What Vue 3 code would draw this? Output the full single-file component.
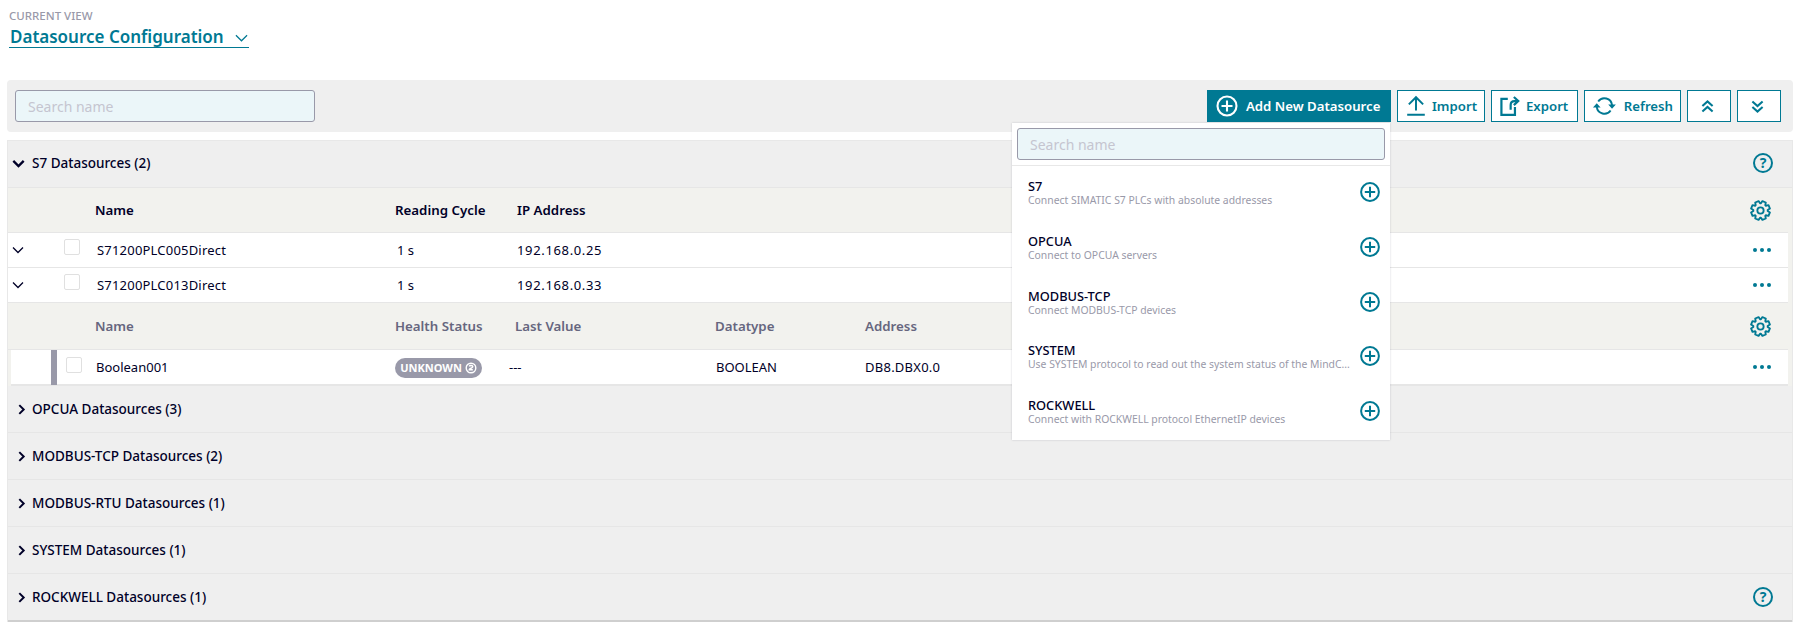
<script setup>
const groups = [
  { name: 'OPCUA Datasources (3)' },
  { name: 'MODBUS-TCP Datasources (2)' },
  { name: 'MODBUS-RTU Datasources (1)' },
  { name: 'SYSTEM Datasources (1)' },
  { name: 'ROCKWELL Datasources (1)', help: true },
]
const rows = [
  { name: 'S71200PLC005Direct', ip: '192.168.0.25' },
  { name: 'S71200PLC013Direct', ip: '192.168.0.33' },
]
const items = [
  { t: 'S7', d: 'Connect SIMATIC S7 PLCs with absolute addresses' },
  { t: 'OPCUA', d: 'Connect to OPCUA servers' },
  { t: 'MODBUS-TCP', d: 'Connect MODBUS-TCP devices' },
  { t: 'SYSTEM', d: 'Use SYSTEM protocol to read out the system status of the MindC...' },
  { t: 'ROCKWELL', d: 'Connect with ROCKWELL protocol EthernetIP devices' },
]
const polar = (deg, r) => {
  const a = (deg * Math.PI) / 180
  return `${(12 + r * Math.cos(a)).toFixed(2)} ${(12 + r * Math.sin(a)).toFixed(2)}`
}
let gear = ''
for (let i = 0; i < 8; i++) {
  const c = i * 45 + 22.5
  gear += `${i ? 'L' : 'M'}${polar(c - 19, 8.2)}L${polar(c - 11, 11)}L${polar(c + 11, 11)}L${polar(c + 19, 8.2)}`
}
const gearPath = gear + 'Z'
</script>

<template>
  <div class="page">
    <header class="view">
      <div class="view-label">CURRENT VIEW</div>
      <div class="view-title">
        <span>Datasource Configuration</span>
        <svg class="view-chev" viewBox="0 0 14 8"><path d="M1 1l6 6 6-6" /></svg>
      </div>
    </header>

    <div class="toolbar">
      <div class="search"><span>Search name</span></div>
      <div class="actions">
        <div class="add-wrap">
          <button class="btn primary">
            <svg class="ico-22" viewBox="0 0 22 22"><circle cx="11" cy="11" r="9.5" /><path d="M11 5.5v11M5.5 11h11" /></svg>
            <span>Add New Datasource</span>
          </button>
          <div class="menu">
            <div class="menu-search"><div class="search wide"><span>Search name</span></div></div>
            <div v-for="it in items" :key="it.t" class="menu-item">
              <div class="menu-text">
                <div class="menu-title">{{ it.t }}</div>
                <div class="menu-desc">{{ it.d }}</div>
              </div>
              <svg class="ico-plus" viewBox="0 0 20 20"><circle cx="10" cy="10" r="8.9" /><path d="M10 4.800v10.400M4.800 10h10.400" /></svg>
            </div>
          </div>
        </div>
        <button class="btn w-import">
          <svg class="ico-22" viewBox="0 0 18 20"><path d="M9 14V2M2.500 8.500L9 2l6.500 6.500M1 18h16" /></svg>
          <span>Import</span>
        </button>
        <button class="btn w-export">
          <svg class="ico-22 ico-export" viewBox="0 0 20 20"><path d="M8 3.600H2.200V18H14.500V11" /><path d="M10.600 13.500V9c0-2.500 1.500-3.500 3.500-3.500H17M13.500 1.800L17.500 5.500 13.500 9.200" /></svg>
          <span>Export</span>
        </button>
        <button class="btn w-refresh">
          <svg class="ico-refresh" viewBox="0 0 26 22"><path d="M6.500 6.300A8 8 0 0 1 21 10" /><path d="M19.500 15.700A8 8 0 0 1 5 12" /><path class="fill" d="M17 9.500h8L21 14zM1 12.500h8L5 8z" /></svg>
          <span>Refresh</span>
        </button>
        <button class="btn square">
          <svg class="ico-chev" viewBox="0 0 14 14"><path d="M1.500 6.500L7 1.500l5.500 5M1.500 12.500L7 7.500l5.500 5" /></svg>
        </button>
        <button class="btn square">
          <svg class="ico-chev" viewBox="0 0 14 14"><path d="M1.500 1.500L7 6.500l5.500-5M1.500 7.500L7 12.500l5.500-5" /></svg>
        </button>
      </div>
    </div>

    <div class="panel">
      <div class="group first">
        <svg class="group-chev" viewBox="0 0 10 10"><path d="M1 3l4 4 4-4" /></svg>
        <span class="group-name">S7 Datasources (2)</span>
        <svg class="ico-help" viewBox="0 0 20 20"><circle cx="10" cy="10" r="9" /><text x="10" y="14.500" text-anchor="middle">?</text></svg>
      </div>

      <div class="thead grid-a">
        <span></span><span></span>
        <span>Name</span><span>Reading Cycle</span><span>IP Address</span>
        <svg class="ico-gear" viewBox="0 0 24 24"><path :d="gearPath" /><circle cx="12" cy="12" r="3.600" /></svg>
      </div>

      <div v-for="r in rows" :key="r.name" class="trow grid-a">
        <svg class="row-chev" viewBox="0 0 12 8"><path d="M1 1.500l5 5 5-5" /></svg>
        <span class="check"></span>
        <span class="cell-name">{{ r.name }}</span>
        <span class="cell-cycle">1 s</span>
        <span class="cell-ip">{{ r.ip }}</span>
        <span class="dots"><i></i><i></i><i></i></span>
      </div>

      <div class="thead sub grid-b">
        <span></span>
        <span>Name</span><span>Health Status</span><span>Last Value</span><span>Datatype</span><span>Address</span>
        <svg class="ico-gear" viewBox="0 0 24 24"><path :d="gearPath" /><circle cx="12" cy="12" r="3.600" /></svg>
      </div>

      <div class="trow nested grid-b">
        <span class="check bar"></span>
        <span class="cell-name">Boolean001</span>
        <span class="badge">UNKNOWN
          <svg viewBox="0 0 12 12"><circle cx="6" cy="6" r="4.800" /><path d="M4.200 4.400c.6-1.300 3.600-1.300 3.600.4 0 1.300-3.600 1.600-3.600 3h3.600" /></svg>
        </span>
        <span class="cell-last">---</span>
        <span>BOOLEAN</span>
        <span class="cell-addr">DB8.DBX0.0</span>
        <span class="dots"><i></i><i></i><i></i></span>
      </div>

      <div v-for="g in groups" :key="g.name" class="group">
        <svg class="group-chev right" viewBox="0 0 10 10"><path d="M3 1l4 4-4 4" /></svg>
        <span class="group-name">{{ g.name }}</span>
        <svg v-if="g.help" class="ico-help" viewBox="0 0 20 20"><circle cx="10" cy="10" r="9" /><text x="10" y="14.500" text-anchor="middle">?</text></svg>
      </div>
    </div>
  </div>
</template>

<style>
html, body { margin: 0; background: #fff; }
</style>

<style scoped>
.page {
  width: 1804px;
  height: 627px;
  overflow: hidden;
  box-sizing: border-box;
  padding: 9px 11px 0 7px;
  font-family: "Noto Sans", "Liberation Sans", sans-serif;
  font-size: 13px;
  color: #000028;
}
.view { padding-left: 2px; height: 71px; box-sizing: border-box; }
.view-label { font-size: 11.5px; line-height: 14px; color: #9999a9; font-weight: 500; }
.view-title {
  display: inline-flex;
  align-items: center;
  justify-content: space-between;
  width: 240px;
  height: 25px;
  box-sizing: border-box;
  border-bottom: 1px solid #007993;
  color: #007993;
  font-size: 17px;
  font-weight: 600;
  padding: 2px 1px 0 1px;
}
.view-chev { width: 13px; height: 8px; fill: none; stroke: #007993; stroke-width: 1.300; margin-top: 4px; }

.toolbar {
  display: flex;
  justify-content: space-between;
  align-items: center;
  height: 52px;
  padding: 0 12px 0 8px;
  background: #efefef;
  border-radius: 4px;
}
.search {
  width: 300px;
  height: 32px;
  box-sizing: border-box;
  display: flex;
  align-items: center;
  padding-left: 12px;
  background: #ebf6f9;
  border: 1px solid #9999a9;
  border-radius: 3px;
  color: #c5c5d0;
  font-size: 14px;
}
.search.wide { width: 100%; }
.actions { display: flex; gap: 6px; }
.add-wrap { position: relative; }
.btn {
  display: flex;
  align-items: center;
  gap: 5px;
  height: 32px;
  box-sizing: border-box;
  padding: 0 7px;
  background: #fff;
  border: 1px solid #007993;
  color: #007993;
  font: 600 13.2px "Noto Sans", sans-serif;
  white-space: nowrap;
}
.btn.primary { width: 184px; background: #007993; color: #fff; padding-left: 9px; gap: 8px; border: 0; }
.btn.w-import { width: 88px; }
.btn.w-export { width: 87px; }
.btn.w-refresh { width: 97px; gap: 7px; }
.btn.square { width: 44px; padding: 0 0 0 13px; }
.btn svg { fill: none; stroke: currentColor; stroke-width: 1.800; }
.ico-22 { width: 22px; height: 22px; }
.primary .ico-22 { stroke-width: 2.100; }
.btn .ico-export { stroke-width: 2; }
.ico-refresh { width: 25px; height: 22px; }
.btn .ico-refresh { stroke-width: 2; }
.ico-refresh .fill { fill: currentColor; stroke: none; }
.btn .ico-chev { width: 13px; height: 13px; stroke-width: 2.200; }

.menu {
  position: absolute;
  z-index: 5;
  top: 33px;
  left: -195px;
  width: 378px;
  height: 317px;
  background: #fff;
  box-shadow: 0 0 2px rgba(0, 0, 40, 0.18);
}
.menu-search {
  box-sizing: border-box;
  padding: 5px;
  height: 43px;
  border-bottom: 1px solid #e8e8e8;
}
.menu-item {
  display: flex;
  align-items: center;
  justify-content: space-between;
  height: 54.700px;
  padding: 0 10px 0 16px;
  box-sizing: border-box;
}
.menu-text { width: 325px; }
.menu-title { font-size: 12.800px; font-weight: 500; line-height: 14px; padding-top: 1px; }
.menu-desc {
  font-size: 10.400px;
  line-height: 15px;
  color: #9999a9;
  white-space: nowrap;
  overflow: hidden;
  text-overflow: ellipsis;
}
.ico-plus { width: 20px; height: 20px; fill: none; stroke: #007993; stroke-width: 2; margin-top: -2px; }

.panel {
  margin-top: 8px;
  border-left: 1px solid #e8e8e8;
  border-right: 1px solid #e8e8e8;
  border-top: 1px solid #e8e8e8;
  background: #f2f2ee;
}
.group {
  display: flex;
  align-items: center;
  height: 47px;
  box-sizing: border-box;
  padding: 0 19px 0 6px;
  background: #efefef;
  border-bottom: 1px solid #e6e6e6;
  font-size: 13.500px;
}
.group.first { padding: 0 19px 2px 4px; }
.group:last-child { border-bottom: 2px solid #cfcfcf; height: 48px; }
.group-chev { width: 13px; height: 13px; fill: none; stroke: #000028; stroke-width: 1.800; margin-right: 7px; }
.group-chev.right { margin-left: 2px; margin-right: 5px; width: 11px; }
.group-name { font-weight: 500; flex: 1; }
.ico-help { width: 20px; height: 20px; fill: none; stroke: #007993; stroke-width: 2; }
.ico-help text { fill: #007993; stroke: none; font: 700 14px "Noto Sans", sans-serif; }

.grid-a { display: grid; grid-template-columns: 56px 31px 300px 122px 1fr 54px; }
.grid-b { display: grid; grid-template-columns: 87px 300px 120px 200px 150px 1fr 54px; }
.thead {
  align-items: center;
  height: 45px;
  box-sizing: border-box;
  border-bottom: 1px solid #e6e6e6;
  background: #f2f2ee;
  font-size: 13.300px;
  font-weight: 600;
  margin-right: 4px;
}
.thead.sub { height: 47px; color: #66667e; }
.ico-gear { width: 21px; height: 21px; fill: none; stroke: #007993; stroke-width: 2.100; stroke-linejoin: round; margin-left: 16px; }
.trow {
  align-items: center;
  height: 35px;
  box-sizing: border-box;
  background: #fff;
  border-bottom: 1px solid #e6e6e6;
  margin-right: 4px;
}
.trow.nested {
  height: 36px;
  margin-left: 3px;
  grid-template-columns: 85px 299px 114px 207px 149px 1fr 54px;
  border-bottom-width: 2px;
}
.row-chev { width: 12px; height: 8px; margin-left: 4px; fill: none; stroke: #000028; stroke-width: 1.300; }
.check {
  width: 14px;
  height: 14px;
  border: 1px solid #e0e0e0;
  border-radius: 2px;
  background: #fff;
  margin-bottom: 6px;
}
.check.bar { position: relative; margin-left: 55px; margin-bottom: 4px; }
.check.bar::before {
  content: "";
  position: absolute;
  left: -16px;
  top: -8px;
  width: 6px;
  height: 35px;
  background: #9999a9;
}
.cell-name { padding-left: 2px; letter-spacing: 0.2px; }
.nested .cell-name { padding-left: 0; letter-spacing: 0; }
.cell-cycle { padding-left: 2px; }
.cell-ip { letter-spacing: 0.65px; }
.cell-addr { letter-spacing: 0.25px; }
.dots { display: flex; gap: 3px; margin-left: 19px; }
.dots i { width: 4px; height: 4px; border-radius: 50%; background: #007993; }
.badge {
  display: inline-flex;
  align-items: center;
  gap: 3px;
  justify-content: center;
  width: 87px;
  height: 20px;
  box-sizing: border-box;
  border-radius: 10px;
  background: #9999a9;
  color: #fff;
  font-size: 11px;
  font-weight: 700;
  margin-top: 1px;
}
.badge svg { width: 12px; height: 12px; fill: none; stroke: #fff; stroke-width: 1.400; }
</style>
